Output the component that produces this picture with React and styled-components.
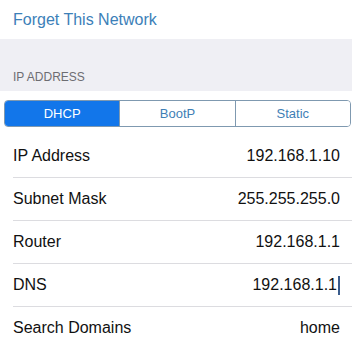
import styled, { createGlobalStyle } from "styled-components"

const Global = createGlobalStyle`
body{
    margin: 0;
    background: #fff;
    font-family: "Liberation Sans", Arial, sans-serif;
}
`

const Page = styled.div`
width: 352px;
height: 349px;
overflow: hidden;
background: #fff;
`

const ActionCell = styled.div`
height: 39px;
display: flex;
align-items: center;
padding: 0 13px;
font-size: 16px;
color: #3c80b8;
`

const SectionHeader = styled.div`
height: 52px;
background: #efeff4;
display: flex;
align-items: flex-end;
padding: 0 13px 7px;
box-sizing: border-box;
font-size: 12px;
color: #6d6d72;
`

const ControlWrap = styled.div`
height: 44px;
display: flex;
align-items: center;
padding: 0 1px 0 4px;
`

const Segmented = styled.div`
flex: 1;
display: flex;
height: 27px;
border: 1px solid #7f99b0;
border-radius: 4px;
box-sizing: border-box;
overflow: hidden;
`

const Segment = styled.div`
flex: 1;
display: flex;
align-items: center;
justify-content: center;
font-size: 13px;
background: ${p => p.active ? "#1276ea" : "#fff"};
color: ${p => p.active ? "#fff" : "#3f7fb6"};
& + &{
    border-left: 1px solid #7f99b0;
}
`

const Row = styled.div`
height: 42px;
margin-left: 13px;
padding-right: 12px;
display: flex;
align-items: center;
justify-content: space-between;
border-bottom: 1px solid #dcdce0;
font-size: 16px;
color: #111;
`

const Value = styled.span`
display: flex;
align-items: center;
color: #111;
`

const Caret = styled.span`
width: 2px;
height: 19px;
margin-left: 1px;
background: #3a5c8c;
`

const rows = [
    { label: "IP Address", value: "192.168.1.10" },
    { label: "Subnet Mask", value: "255.255.255.0" },
    { label: "Router", value: "192.168.1.1" },
    { label: "DNS", value: "192.168.1.1", editing: true },
    { label: "Search Domains", value: "home" },
]

const App = () => {
    return <Page>
        <Global />
        <ActionCell>Forget This Network</ActionCell>
        <SectionHeader>IP ADDRESS</SectionHeader>
        <ControlWrap>
            <Segmented>
                <Segment active>DHCP</Segment>
                <Segment>BootP</Segment>
                <Segment>Static</Segment>
            </Segmented>
        </ControlWrap>
        {
            rows.map((r, i) => <Row key={i}>
                <span>{r.label}</span>
                <Value>
                    {r.value}
                    {r.editing && <Caret />}
                </Value>
            </Row>)
        }
    </Page>
}

export default App
